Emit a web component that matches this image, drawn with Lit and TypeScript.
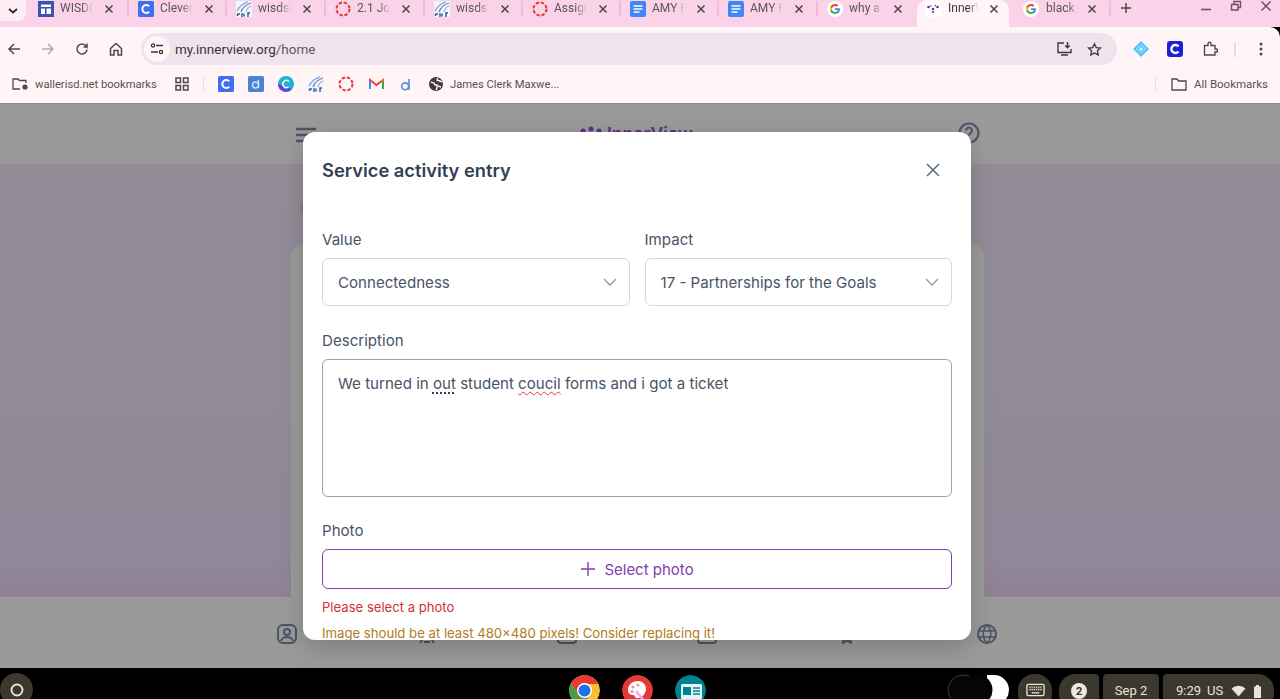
import { LitElement, html, css } from "lit";
import { customElement } from "lit/decorators.js";

const closeX = html`<svg class="tab-x" width="10" height="10" viewBox="0 0 10 10"><path d="M1.5 1.500l7 7M8.500 1.500l-7 7" stroke="#4a4448" stroke-width="1.500" fill="none"/></svg>`;

const dashedRing = html`<svg width="16" height="16" viewBox="0 0 16 16"><circle cx="8" cy="8" r="6.500" fill="none" stroke="#e53935" stroke-width="2" stroke-dasharray="3.400 1.700"/></svg>`;

const cleverC = html`<svg width="16" height="16" viewBox="0 0 16 16"><rect width="16" height="16" rx="1.500" fill="#3f6ff0"/><path d="M11.200 5.200A4 4 0 1 0 11.200 10.800" fill="none" stroke="#fff" stroke-width="2"/></svg>`;

const wisdBars = html`<svg width="16" height="16" viewBox="0 0 16 16" fill="none"><rect width="16" height="16" fill="#f4f5fa"/><path d="M1 10C3 6 7 2.500 12 .8" stroke="#8ea6d6" stroke-width="1.300"/><path d="M5 11C6 7.500 9.500 4 15 2" stroke="#5f80c0" stroke-width="1.300"/><path d="M10 11c.5-2.500 2-5 5.500-6" stroke="#9db2dd" stroke-width="1.300"/><path d="M1.500 15v-2.500M2 13h2M6 16v-4M8 12.500v3M12 16v-4h2" stroke="#34558f" stroke-width="1.400"/></svg>`;

const docIcon = html`<svg width="16" height="16" viewBox="0 0 16 16"><rect width="16" height="16" rx="2" fill="#4285f4"/><path d="M3.500 5h9M3.500 8h9M3.500 11h6" stroke="#fff" stroke-width="1.300"/></svg>`;

const gIcon = html`<svg width="16" height="16" viewBox="0 0 16 16"><circle cx="8" cy="8" r="8" fill="#fff"/><path d="M12.900 8.200c0-.4 0-.7-.1-1H8v1.900h2.800c-.1.7-.5 1.200-1 1.600v1.300h1.600c1-.9 1.500-2.200 1.500-3.800z" fill="#4285f4"/><path d="M8 13c1.400 0 2.500-.5 3.400-1.200l-1.600-1.300c-.5.300-1 .5-1.800.5-1.300 0-2.500-.9-2.900-2.100H3.400v1.300C4.200 11.900 6 13 8 13z" fill="#34a853"/><path d="M5.100 8.900c-.2-.6-.2-1.200 0-1.800V5.800H3.400c-.6 1.400-.6 3 0 4.400z" fill="#fbbc05"/><path d="M8 5c.8 0 1.400.3 1.900.8l1.500-1.500C10.500 3.500 9.400 3 8 3 6 3 4.200 4.100 3.400 5.800l1.700 1.300C5.500 5.900 6.700 5 8 5z" fill="#ea4335"/></svg>`;

const ivIcon = html`<svg width="16" height="16" viewBox="0 0 16 16"><rect width="16" height="16" fill="#fff"/><g fill="#6a2c9e"><circle cx="3.500" cy="6" r="1.300"/><circle cx="12.500" cy="6" r="1.300"/><circle cx="8" cy="8" r="1.300"/><circle cx="5.800" cy="4.800" r=".8"/><circle cx="10.200" cy="4.800" r=".8"/><circle cx="8" cy="11" r="1.100"/></g></svg>`;

const layoutIcon = html`<svg width="16" height="16" viewBox="0 0 16 16"><rect width="16" height="16" fill="#3f51b5"/><path d="M3 3.500h10v2.500H3zM3 7.500h4V13H3zM8.500 7.500H13V13H8.500z" fill="#fff"/></svg>`;

interface Tab { w: number; icon: unknown; label: string; kind?: string; }

const tabs: Tab[] = [
  { w: 100, icon: layoutIcon, label: "WISDO" },
  { w: 98, icon: cleverC, label: "Clever" },
  { w: 99, icon: wisdBars, label: "wisdsk" },
  { w: 99, icon: dashedRing, label: "2.1 Jo" },
  { w: 98, icon: wisdBars, label: "wisdsk" },
  { w: 98, icon: dashedRing, label: "Assign" },
  { w: 98, icon: docIcon, label: "AMY R" },
  { w: 99, icon: docIcon, label: "AMY R" },
  { w: 90, icon: gIcon, label: "why a", kind: "before" },
  { w: 92, icon: ivIcon, label: "InnerV", kind: "active" },
  { w: 103, icon: gIcon, label: "black -", kind: "after" },
];

@customElement("browser-tabs")
class BrowserTabs extends LitElement {
  static styles = css`
    :host { display: flex; height: 27px; background: #fbd3e9; font: 12px Roboto, sans-serif; color: #5b5458; }
    .menu { width: 26px; height: 21px; background: #fdeef6; border-radius: 0 0 8px 0; display: flex; align-items: center; justify-content: center; flex: none; }
    .tabs { display: flex; padding-left: 12px; }
    .tab { display: flex; align-items: flex-start; padding-top: 1px; position: relative; box-sizing: border-box; flex: none; }
    .ic { width: 16px; height: 16px; flex: none; display: block; }
    .t { width: 33px; margin-left: 6px; overflow: hidden; white-space: nowrap; line-height: 15px; -webkit-mask-image: linear-gradient(90deg, #000 65%, transparent); mask-image: linear-gradient(90deg, #000 65%, transparent); }
    .tab-x { margin: 3px 0 0 11px; flex: none; }
    .tab::after { content: ""; position: absolute; right: 9px; top: 1px; width: 2px; height: 15px; background: #f6b6d8; }
    .tab.before::after, .tab.active::after { display: none; }
    .tab.active { background: #fff5f6; border-radius: 10px 10px 0 0; padding-left: 8px; height: 27px; color: #3d383b; }
    .tab.active .t { width: 31px; margin-left: 7px; }
    .tab.active .tab-x { margin-left: 10px; }
    .tab.after { padding-left: 14px; }
    .tab.after .t { margin-left: 7px; }
    .tab.after .tab-x { margin-left: 8px; }
    .tab.after::after { right: 1px; }
    .plus { width: 28px; display: flex; justify-content: center; padding-top: 2px; box-sizing: border-box; flex: none; }
    .win { margin-left: auto; display: flex; gap: 18px; padding-right: 8px; }
    svg { display: block; }
  `;
  render() {
    return html`
      <div class="menu"><svg width="10" height="6" viewBox="0 0 10 6"><path d="M1 1l4 3.500L9 1" fill="none" stroke="#2b2629" stroke-width="1.800"/></svg></div>
      <div class="tabs">
        ${tabs.map((t) => html`
          <div class="tab ${t.kind ?? ""}" style="width:${t.w}px">
            <span class="ic">${t.icon}</span><span class="t">${t.label}</span>${closeX}
          </div>`)}
      </div>
      <div class="plus"><svg width="12" height="12" viewBox="0 0 12 12"><path d="M6 1v10M1 6h10" stroke="#4a4448" stroke-width="1.500"/></svg></div>
      <div class="win">
        <svg width="12" height="14" viewBox="0 0 12 14"><path d="M1 9.500h10" stroke="#7a4a63" stroke-width="1.600"/></svg>
        <svg width="12" height="14" viewBox="0 0 12 14"><path d="M1.500 4.500h6.500v5.500H1.500zM4 4.500V1.500h6.500v6H8" fill="none" stroke="#7a4a63" stroke-width="1.400"/></svg>
        <svg width="12" height="14" viewBox="0 0 12 14"><path d="M1.500 1.500l9 9M10.500 1.500l-9 9" stroke="#7a4a63" stroke-width="1.500"/></svg>
      </div>
    `;
  }
}

@customElement("browser-toolbar")
class BrowserToolbar extends LitElement {
  static styles = css`
    :host { display: flex; align-items: center; height: 38px; background: #fff5f6; border-radius: 0 10px 0 0; padding: 6px 0 0 6px; box-sizing: border-box; font: 13.500px Roboto, sans-serif; }
    .nav { display: flex; width: 135px; align-items: center; flex: none; gap: 18px; }
    svg { display: block; flex: none; }
    .omni { display: flex; align-items: center; width: 976px; height: 32px; border-radius: 16px; background: #f0e3ee; flex: none; color: #3a3438; box-sizing: border-box; padding-left: 3px; }
    .site { width: 26px; height: 26px; border-radius: 13px; background: #fff5f6; display: flex; align-items: center; justify-content: center; flex: none; }
    .url { margin-left: 5px; }
    .url span { color: #5f5a5e; }
    .end { margin-left: auto; display: flex; align-items: center; gap: 14px; padding-right: 15px; }
    .exts { display: flex; align-items: center; padding-left: 16px; }
    .cl { margin-left: 18px; }
    .pz { margin-left: 19px; }
    .sep { width: 2px; height: 15px; background: #fbd3e9; margin-left: 16px; }
    .dots { margin-left: 23px; }
  `;
  render() {
    return html`
      <div class="nav">
        <svg width="16" height="16" viewBox="0 0 16 16"><path d="M14 8H3M8 3L3 8l5 5" fill="none" stroke="#4e484c" stroke-width="1.500"/></svg>
        <svg width="16" height="16" viewBox="0 0 16 16"><path d="M2 8h11M8 3l5 5-5 5" fill="none" stroke="#b0a9ad" stroke-width="1.500"/></svg>
        <svg width="16" height="16" viewBox="0 0 16 16"><path d="M13 8.500A5 5 0 1 1 11.500 4.500L13 6V2.500M13 6H9.500" fill="none" stroke="#4e484c" stroke-width="1.500"/></svg>
        <svg width="16" height="16" viewBox="0 0 16 16"><path d="M2.500 7.500L8 2.500l5.500 5V14H10V9.500H6V14H2.500z" fill="none" stroke="#4e484c" stroke-width="1.500"/></svg>
      </div>
      <div class="omni">
        <div class="site"><svg width="14" height="12" viewBox="0 0 14 12"><g fill="none" stroke="#3a3438" stroke-width="1.300"><circle cx="3" cy="2.500" r="1.600"/><path d="M6 2.500h7M1 9h7"/><circle cx="11" cy="9" r="1.600"/></g></svg></div>
        <div class="url">my.innerview.org<span>/home</span></div>
        <div class="end">
          <svg width="17" height="16" viewBox="0 0 17 16"><path d="M8 2H2v9.500h13V8M5 14h7" fill="none" stroke="#3f393d" stroke-width="1.400"/><path d="M11.500 1v5.500M9.300 4.500l2.200 2.200 2.200-2.200" fill="none" stroke="#3f393d" stroke-width="1.400"/></svg>
          <svg width="15" height="15" viewBox="0 0 16 16"><path d="M8 1.800l1.900 4.100 4.500.5-3.300 3 .9 4.400L8 11.600l-4 2.200.9-4.400-3.300-3 4.500-.5z" fill="none" stroke="#3f393d" stroke-width="1.400"/></svg>
        </div>
      </div>
      <div class="exts">
        <svg width="16" height="16" viewBox="0 0 16 16"><path d="M8 0l8 8-8 8-8-8z" fill="#4cc3f7"/><path d="M8 3.500L12.500 8 8 12.500 3.500 8z" fill="none" stroke="#b7ebff" stroke-width="1"/><circle cx="8" cy="8" r="1.800" fill="#d9f5ff"/></svg>
        <svg class="cl" width="16" height="16" viewBox="0 0 16 16"><rect width="16" height="16" rx="3" fill="#1c1fd8"/><path d="M11.500 5.500A4 4 0 1 0 11.500 10.500" fill="none" stroke="#fff" stroke-width="2.400"/></svg>
        <svg class="pz" width="16" height="16" viewBox="0 0 16 16"><path d="M2.500 4.500H6V2.800a1.500 1.500 0 0 1 3 0V4.500h4V8h1a1.500 1.500 0 0 1 0 3h-1v3H2.500z" fill="none" stroke="#4e484c" stroke-width="1.400"/></svg>
        <div class="sep"></div>
        <svg class="dots" width="4" height="14" viewBox="0 0 4 14"><g fill="#4e484c"><circle cx="2" cy="2" r="1.500"/><circle cx="2" cy="7" r="1.500"/><circle cx="2" cy="12" r="1.500"/></g></svg>
      </div>
    `;
  }
}

@customElement("browser-bookmarks")
class BrowserBookmarks extends LitElement {
  static styles = css`
    :host { display: flex; align-items: center; height: 39px; background: #fff5f6; border-bottom: 1px solid #8d8a8c; box-sizing: border-box; padding-left: 12px; font: 11.200px Roboto, sans-serif; color: #575155; white-space: nowrap; }
    .folder-label { margin-left: 6px; width: 125px; flex: none; }
    .grid { margin-left: 15px; }
    .sep { width: 1px; height: 16px; background: #fbd3e9; flex: none; }
    .grid-sep { margin: 0 14px; }
    svg { display: block; flex: none; }
    .favs { display: flex; align-items: center; gap: 14px; }
    .fav { width: 16px; display: flex; justify-content: center; }
    .site-label { margin-left: 6px; }
    .right { margin-left: auto; display: flex; align-items: center; padding-right: 12px; font-size: 11.500px; }
    .right .sep { margin-right: 15px; }
    .right svg { margin-right: 7px; }
  `;
  render() {
    return html`
      <svg width="17" height="14" viewBox="0 0 17 14"><path d="M8 12H1V2h5l1.500 1.500H14V6" fill="none" stroke="#4e484c" stroke-width="1.300"/><circle cx="13" cy="10" r="2.600" fill="#4e484c"/></svg>
      <span class="folder-label">wallerisd.net bookmarks</span>
      <svg class="grid" width="14" height="14" viewBox="0 0 14 14"><g fill="none" stroke="#4e484c" stroke-width="1.500"><rect x="1" y="1" width="4.500" height="4.500"/><rect x="8.500" y="1" width="4.500" height="4.500"/><rect x="1" y="8.500" width="4.500" height="4.500"/><rect x="8.500" y="8.500" width="4.500" height="4.500"/></g></svg>
      <div class="sep grid-sep"></div>
      <div class="favs">
        <span class="fav">${cleverC}</span>
        <span class="fav"><svg width="16" height="16" viewBox="0 0 16 16"><rect width="16" height="16" rx="1.500" fill="#4a83d4"/><circle cx="7.500" cy="9" r="3" fill="none" stroke="#cfe0f7" stroke-width="1.400"/><path d="M10.500 4v8" stroke="#cfe0f7" stroke-width="1.400"/></svg></span>
        <span class="fav"><svg width="16" height="16" viewBox="0 0 16 16"><circle cx="8" cy="8" r="8" fill="#22b4cf"/><path d="M0 8a8 8 0 0 0 14 5z" fill="#6a3de0"/><path d="M11 5.500A3.600 3.600 0 1 0 10.500 11" fill="none" stroke="#fff" stroke-width="1.500"/></svg></span>
        <span class="fav">${wisdBars}</span>
        <span class="fav">${dashedRing}</span>
        <span class="fav"><svg width="15" height="12" viewBox="0 0 15 12"><path d="M1 11V2l6.500 5L14 2v9" fill="none" stroke="#ea4335" stroke-width="2"/><path d="M1 11V3" stroke="#4285f4" stroke-width="2"/><path d="M14 11V3" stroke="#34a853" stroke-width="2"/><path d="M13 1.500l1 1" stroke="#fbbc05" stroke-width="2"/></svg></span>
        <span class="fav"><svg width="12" height="15" viewBox="0 0 14 15"><circle cx="6" cy="9.500" r="4" fill="none" stroke="#5b92d8" stroke-width="2"/><path d="M10.500 1v13" stroke="#5b92d8" stroke-width="2"/></svg></span>
        <span class="fav"><svg width="14" height="14" viewBox="0 0 14 14"><circle cx="7" cy="7" r="7" fill="#3f3a3e"/><path d="M2 5l3 1 1 2 2 0 0 3-1 2M9 1l-1 2 3 1 2 1M9 9l3 1" fill="none" stroke="#fff5f6" stroke-width="1.400"/></svg></span>
      </div>
      <span class="site-label">James Clerk Maxwe...</span>
      <div class="right">
        <div class="sep"></div>
        <svg width="16" height="13" viewBox="0 0 16 13"><path d="M1 1h5l1.500 2H15v9H1z" fill="none" stroke="#4e484c" stroke-width="1.300"/></svg>
        <span>All Bookmarks</span>
      </div>
    `;
  }
}

@customElement("chromeos-shelf")
class ChromeosShelf extends LitElement {
  static styles = css`
    :host { display: block; height: 31px; background: #000; overflow: hidden; font: 13px/15px Roboto, sans-serif; color: #e8e4d8; }
    .row { display: flex; align-items: flex-start; height: 31px; }
    svg { display: block; flex: none; }
    .launcher { width: 33px; height: 33px; margin-top: 5px; border-radius: 50%; background: #3b382d; display: flex; align-items: center; justify-content: center; flex: none; }
    .apps { display: flex; gap: 22px; margin: 7px 0 0 536px; flex: none; }
    .app { width: 31px; height: 31px; border-radius: 50%; overflow: hidden; flex: none; }
    .tray { margin-left: auto; display: flex; align-items: flex-start; padding: 6px 6px 0 0; }
    .toggle { margin: 0 9px 0 0; }
    .pill { height: 36px; background: #3b382d; display: flex; align-items: flex-start; justify-content: center; padding-top: 9px; box-sizing: border-box; flex: none; }
    .kbd { width: 34px; border-radius: 16px; margin-right: 7px; }
    .notif { width: 40px; border-radius: 16px 4px 4px 16px; margin-right: 4px; }
    .date { width: 56px; border-radius: 4px; margin-right: 4px; }
    .clock { width: 111px; border-radius: 4px 16px 16px 4px; justify-content: flex-start; padding-left: 13px; }
    .us { margin-left: 6px; }
    .wifi { margin: 2px 0 0 8px; }
    .batt { margin: 1px 0 0 7px; }
  `;
  render() {
    return html`
      <div class="row">
        <div class="launcher"><svg width="14" height="14" viewBox="0 0 14 14"><circle cx="7" cy="7" r="5.500" fill="none" stroke="#ece8d8" stroke-width="1.800"/></svg></div>
        <div class="apps">
          <div class="app"><svg width="31" height="31" viewBox="0 0 31 31"><circle cx="15.500" cy="15.500" r="15.500" fill="#fbc02d"/><path d="M15.500 0A15.500 15.500 0 0 0 2 8l7 12L15.500 9H29A15.500 15.500 0 0 0 15.500 0z" fill="#e53935"/><path d="M2 8A15.500 15.500 0 0 0 13 31l7-10-11-1z" fill="#43a047"/><circle cx="15.500" cy="15.500" r="7.500" fill="#fff"/><circle cx="15.500" cy="15.500" r="6" fill="#1a73e8"/></svg></div>
          <div class="app"><svg width="31" height="31" viewBox="0 0 31 31"><circle cx="15.500" cy="15.500" r="15.500" fill="#e53935"/><path d="M16 6c-6 0-10 4-10 9 0 4 3 5 5 5 2 0 2 2 3 3 3 1 9-2 10-8 .5-5-3-9-8-9z" fill="#fff"/><g fill="#f48fb1"><circle cx="11" cy="12" r="1.600"/><circle cx="16" cy="10" r="1.600"/><circle cx="10" cy="16.500" r="1.600"/></g><path d="M14 16l10 12" stroke="#f8a5e8" stroke-width="2.500"/></svg></div>
          <div class="app"><svg width="31" height="31" viewBox="0 0 31 31"><circle cx="15.500" cy="15.500" r="15.500" fill="#00838f"/><rect x="6" y="9" width="21" height="15" rx="1.500" fill="#e0f7fa"/><rect x="8" y="12" width="8" height="8" fill="#00838f"/><path d="M18 13h7M18 16h7M18 19h7" stroke="#00838f" stroke-width="1.300"/></svg></div>
        </div>
        <div class="tray">
          <svg class="toggle" width="62" height="31" viewBox="0 0 62 31"><path d="M40 1h7a15 15 0 0 1 0 30h-7z" fill="#fff"/><circle cx="16" cy="16" r="15" fill="#050505" stroke="#3b382d"/><circle cx="30" cy="16" r="15.500" fill="#050505"/></svg>
          <div class="pill kbd"><svg width="19" height="14" viewBox="0 0 20 14"><rect x="1" y="1" width="18" height="12" rx="1.500" fill="none" stroke="#e8e4d8" stroke-width="1.400"/><path d="M3.500 4h13M3.500 6.500h13" stroke="#e8e4d8" stroke-width="1.400" stroke-dasharray="1.500 .8"/><path d="M6 10h8" stroke="#e8e4d8" stroke-width="1.400"/></svg></div>
          <div class="pill notif"><svg width="16" height="16" viewBox="0 0 16 16"><circle cx="8" cy="8" r="8" fill="#ede9dc"/><text x="8" y="12" text-anchor="middle" font-size="11.500" font-weight="700" font-family="Roboto, sans-serif" fill="#3b382d">2</text></svg></div>
          <div class="pill date">Sep 2</div>
          <div class="pill clock"><span>9:29</span><span class="us">US</span>
            <svg class="wifi" width="15" height="12" viewBox="0 0 15 12"><path d="M0.500 3.500a10 10 0 0 1 14 0L7.500 11.500z" fill="#e8e4d8"/></svg>
            <svg class="batt" width="9" height="14" viewBox="0 0 9 14"><path d="M3 1h3v1.500h2V14H1V2.500h2z" fill="#e8e4d8"/></svg>
          </div>
        </div>
      </div>
    `;
  }
}

@customElement("activity-modal")
class ActivityModal extends LitElement {
  static styles = css`
    :host { display: block; position: absolute; left: 303px; top: 28px; width: 668px; height: 507.500px; background: #fff; border-radius: 12px; overflow: hidden; box-shadow: 0 8px 24px rgba(0,0,0,.18); font: 15.100px Inter, sans-serif; color: #475467; }
    .inner { padding: 0 19px; }
    .head { display: flex; align-items: center; justify-content: space-between; height: 76px; box-sizing: border-box; }
    h2 { margin: 0; font-size: 18.300px; font-weight: 600; color: #344054; }
    .head svg { display: block; margin-right: 11px; }
    .cols { display: grid; grid-template-columns: 1fr 1fr; gap: 15px; margin-top: 20px; }
    label { display: block; line-height: 24px; color: #475467; margin-bottom: 6px; }
    .sel { height: 48px; border: 1px solid #d0d8e8; border-radius: 6px; display: flex; align-items: center; justify-content: space-between; padding: 0 12px 0 15px; box-sizing: border-box; }
    .area { height: 138px; border: 1px solid #98a2b8; border-radius: 6px; padding: 12px 15px; box-sizing: border-box; line-height: 23px; white-space: pre; }
    .field { margin-top: 23px; }
    .photo { margin-top: 22px; }
    .dot { text-decoration: underline dotted #344054 1.500px; text-underline-offset: 3px; }
    .wave { text-decoration: underline wavy #e53935 1px; text-underline-offset: 2px; }
    .btn { height: 40px; border: 1px solid #7e3fb0; border-radius: 6px; display: flex; align-items: center; justify-content: center; gap: 8px; color: #7e3fb0; font-size: 15px; box-sizing: border-box; }
    svg { display: block; }
    .err { color: #cf3039; font-size: 13.100px; line-height: 20px; margin-top: 8px; }
    .warn { color: #b07a20; font-size: 13.150px; line-height: 20px; margin-top: 6px; white-space: nowrap; }
  `;
  render() {
    const chevron = html`<svg width="14" height="8" viewBox="0 0 14 8"><path d="M1 1l6 6 6-6" fill="none" stroke="#8a9ab5" stroke-width="1.400"/></svg>`;
    return html`
      <div class="inner">
        <div class="head">
          <h2>Service activity entry</h2>
          <svg width="16" height="16" viewBox="0 0 16 16"><path d="M2 2l12 12M14 2L2 14" stroke="#5d6b82" stroke-width="1.500" fill="none"/></svg>
        </div>
        <div class="cols">
          <div><label>Value</label><div class="sel"><span>Connectedness</span>${chevron}</div></div>
          <div><label>Impact</label><div class="sel"><span>17 - Partnerships for the Goals</span>${chevron}</div></div>
        </div>
        <div class="field">
          <label>Description</label>
          <div class="area">We turned in <span class="dot">out</span> student <span class="wave">coucil</span> forms and i got a ticket</div>
        </div>
        <div class="photo">
          <label>Photo</label>
          <div class="btn">
            <svg width="16" height="16" viewBox="0 0 16 16"><path d="M8 1v14M1 8h14" stroke="#7e3fb0" stroke-width="1.400"/></svg>
            <span>Select photo</span>
          </div>
          <div class="err">Please select a photo</div>
          <div class="warn">Image should be at least 480×480 pixels! Consider replacing it!</div>
        </div>
      </div>
    `;
  }
}

@customElement("app-root")
export class AppRoot extends LitElement {
  static styles = css`
    :host { display: flex; flex-direction: column; width: 1280px; height: 699px; overflow: hidden; background: #000; }
    .page { position: relative; height: 564px; display: flex; flex-direction: column; background: #9a9a9a; flex: none; overflow: hidden; }
    .top { height: 60px; flex: none; display: flex; align-items: flex-start; padding-left: 295px; box-sizing: border-box; }
    svg { display: block; flex: none; }
    .burger { width: 22px; margin-top: 23px; }
    .logo { width: 117px; margin: 19px 0 0 263px; display: flex; align-items: flex-start; gap: 3px; font: 600 17.500px/22px Inter, sans-serif; color: #5c2f86; }
    .logo svg { margin-top: 3px; }
    .help { margin: 18px 0 0 261px; }
    .mid { position: relative; flex: none; height: 433px; background: linear-gradient(180deg, #938d98 0%, #908898 90%, #8e8195 100%); padding: 80px 296px 0 291px; box-sizing: border-box; }
    .card { height: 100%; background: #9a9a98; border-radius: 12px 12px 0 0; }
    .avatar { position: absolute; left: 300px; top: 36px; width: 14px; height: 16px; border-radius: 50%; background: #8f7f74; }
    .bottom { flex: 1; display: flex; align-items: flex-start; gap: 120px; padding: 27px 0 0 277px; box-sizing: border-box; }
  `;
  render() {
    const s = "#4b5563";
    return html`
      <browser-tabs></browser-tabs>
      <browser-toolbar></browser-toolbar>
      <browser-bookmarks></browser-bookmarks>
      <div class="page">
        <div class="top">
          <svg class="burger" width="22" height="16" viewBox="0 0 22 16"><path d="M1 2h20M1 8h15M1 14h10" stroke=${s} stroke-width="2.500"/></svg>
          <div class="logo">
            <svg width="24" height="10" viewBox="0 0 24 10"><g fill="#5c2f86"><circle cx="3" cy="5" r="2.500"/><circle cx="11" cy="3" r="2.500"/><circle cx="19" cy="5" r="2.500"/></g></svg>
            <span>InnerView</span>
          </div>
          <svg class="help" width="22" height="22" viewBox="0 0 22 22"><circle cx="11" cy="11" r="9.500" fill="none" stroke=${s} stroke-width="2.200"/><path d="M8 8.500a3 3 0 1 1 4.500 2.600c-1 .6-1.500 1.200-1.500 2.400M11 15.500v1.500" fill="none" stroke=${s} stroke-width="2"/></svg>
        </div>
        <div class="mid">
          <div class="avatar"></div>
          <div class="card"></div>
        </div>
        <div class="bottom">
          <svg width="20" height="20" viewBox="0 0 20 20"><rect x="1" y="1" width="18" height="18" rx="5" fill="none" stroke=${s} stroke-width="2"/><circle cx="10" cy="8" r="3" fill="none" stroke=${s} stroke-width="2"/><path d="M4 17c1-3 3-4 6-4s5 1 6 4" fill="none" stroke=${s} stroke-width="2"/></svg>
          <svg width="20" height="20" viewBox="0 0 20 20"><path d="M3 19l3-5M17 19l-3-5M7 18h6" fill="none" stroke=${s} stroke-width="2"/></svg>
          <svg width="20" height="20" viewBox="0 0 20 20"><rect x="1" y="3" width="18" height="16" rx="3" fill="none" stroke=${s} stroke-width="2"/></svg>
          <svg width="20" height="20" viewBox="0 0 20 20"><rect x="1" y="3" width="18" height="16" rx="3" fill="none" stroke=${s} stroke-width="2"/></svg>
          <svg width="20" height="20" viewBox="0 0 20 20"><path d="M6 19l1-6-4-4h14l-4 4 1 6-4-3z" fill="none" stroke=${s} stroke-width="2"/></svg>
          <svg width="20" height="20" viewBox="0 0 20 20"><circle cx="10" cy="10" r="9" fill="none" stroke=${s} stroke-width="2"/><path d="M1 7h18M1 13h18M10 1c-5 5-5 13 0 18M10 1c5 5 5 13 0 18" fill="none" stroke=${s} stroke-width="1.500"/></svg>
        </div>
        <activity-modal></activity-modal>
      </div>
      <chromeos-shelf></chromeos-shelf>
    `;
  }
}
